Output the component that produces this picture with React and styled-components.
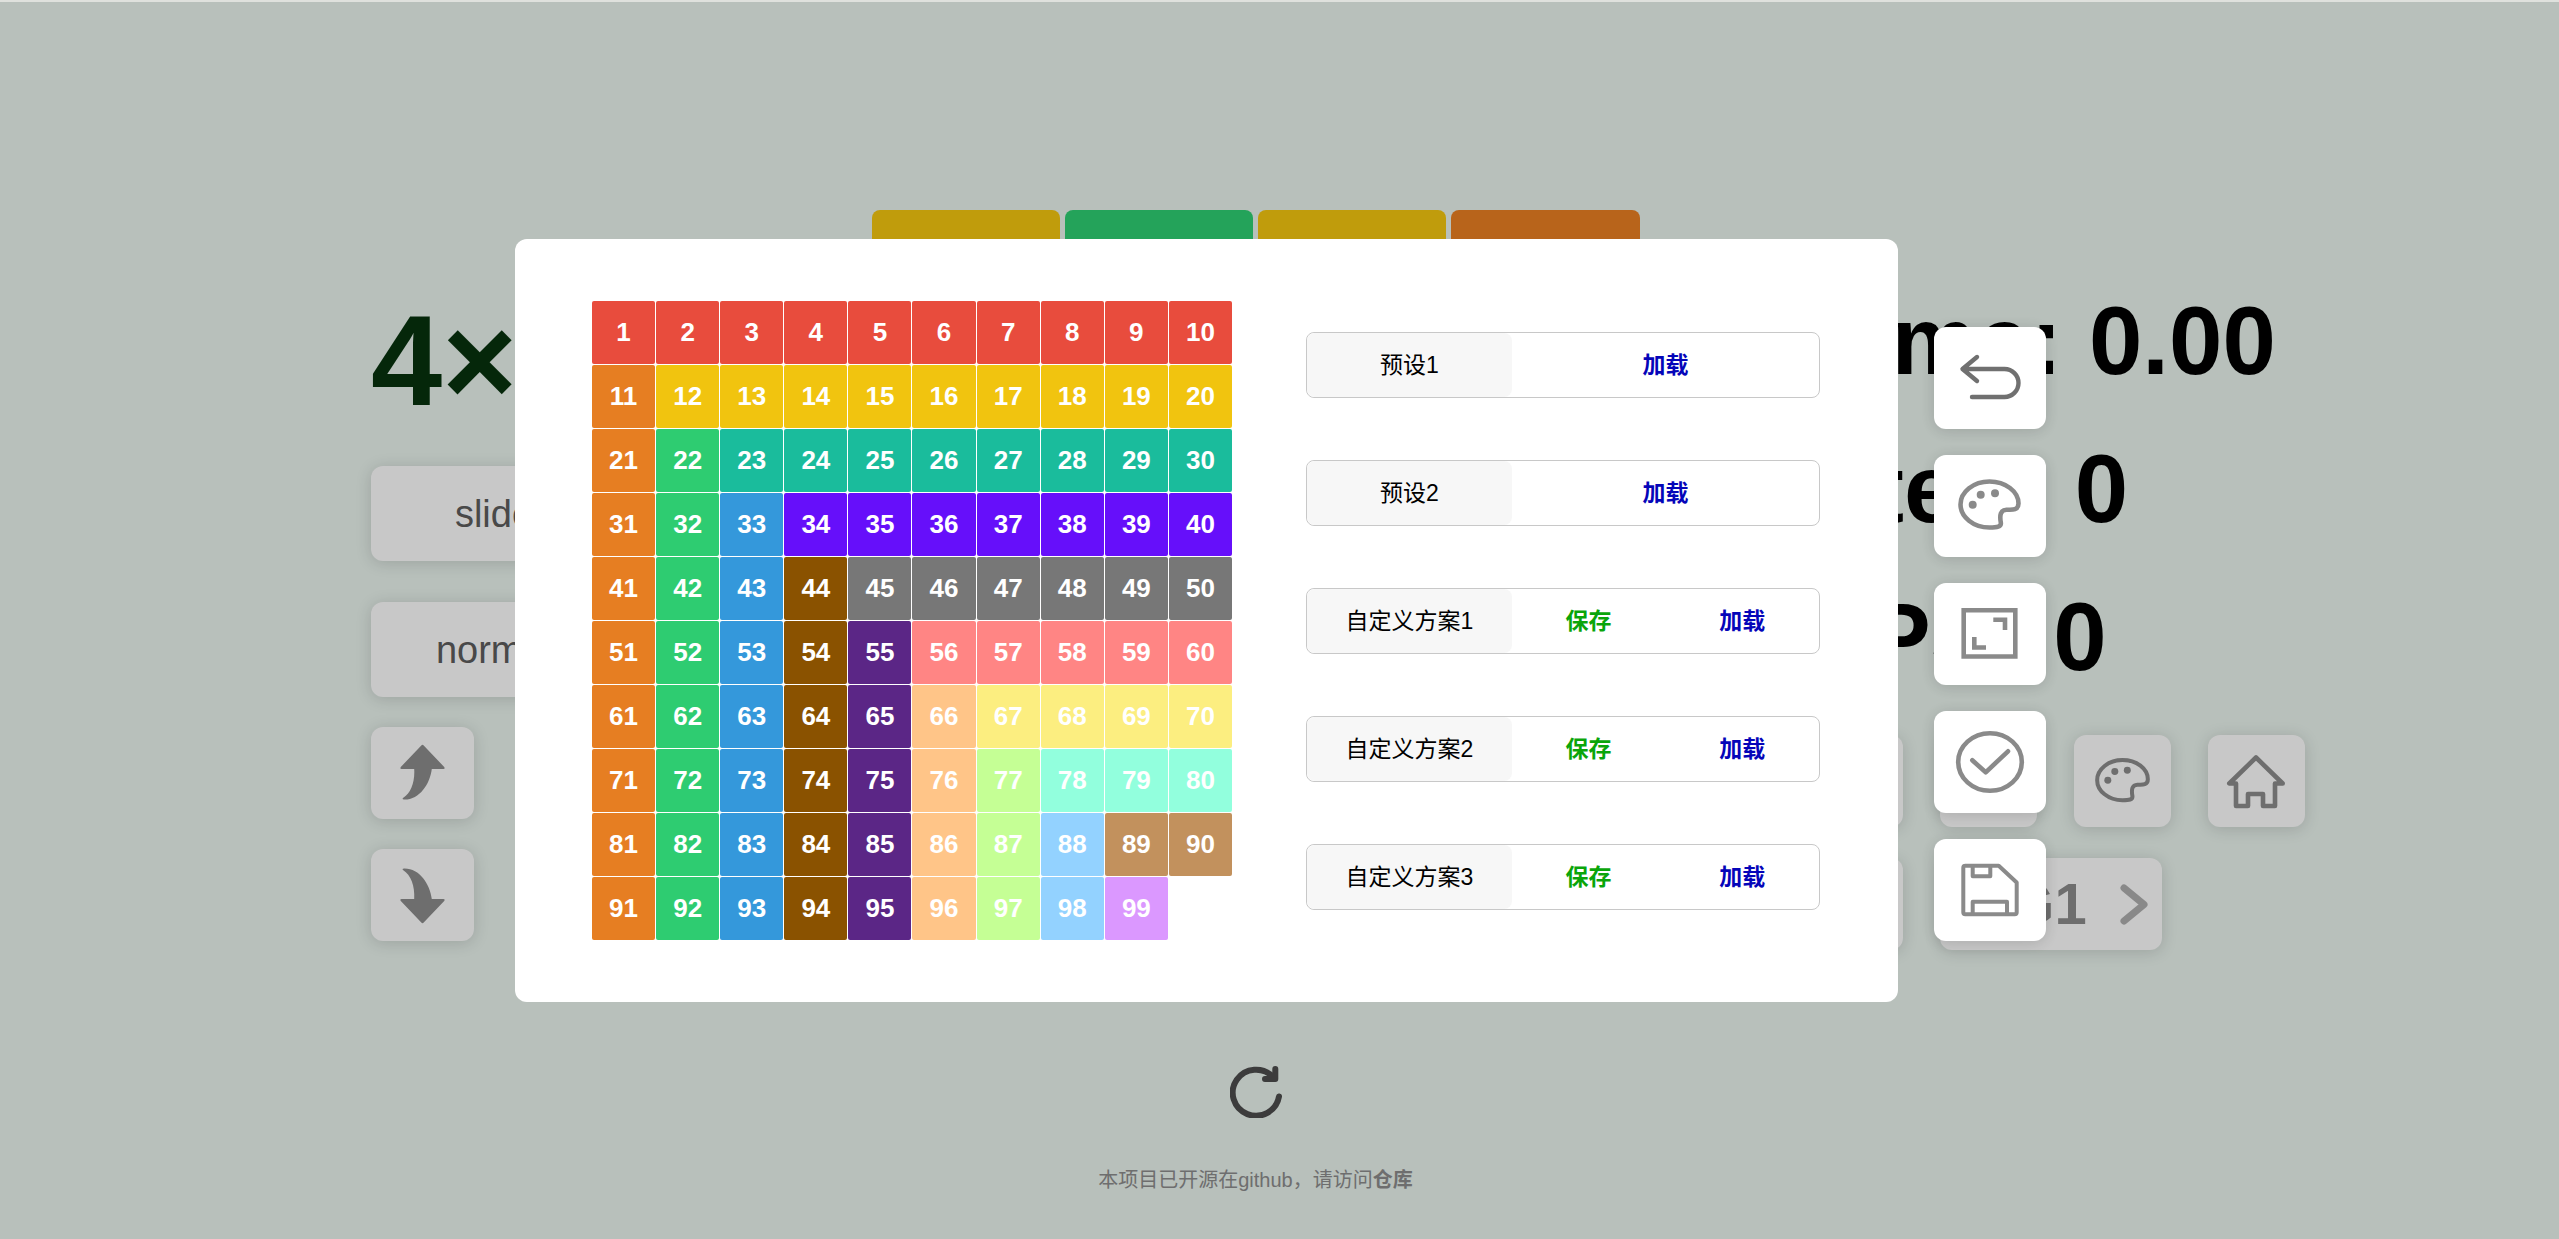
import React from "react";
import styled, { createGlobalStyle } from "styled-components";

const GlobalStyle = createGlobalStyle`
  *, *::before, *::after { box-sizing: border-box; }
  body {
    margin: 0;
    background: #e6f0ea;
    color: #000;
    font-family: "Liberation Sans", "Noto Sans CJK SC", sans-serif;
  }
  button, select { font: inherit; }
`;

const Page = styled.main`
  display: grid;
  grid-template-columns: 334px 768px 500px;
  justify-content: space-between;
  align-items: start;
  min-height: 100vh;
  padding: 210px 253px 0 371px;
  overflow: hidden;
`;

const Settings = styled.section`
  display: flex;
  flex-direction: column;
  align-items: flex-start;
  gap: 30px;
  padding-top: 87px;
`;

const Size = styled.h1`
  margin: 0 0 11px;
  font-size: 128px;
  line-height: 128px;
  color: #07310d;
`;

const ModeSelect = styled.select`
  appearance: none;
  width: 246px;
  height: 95px;
  margin-bottom: ${(p) => (p.$spaced ? "11px" : "0")};
  padding: 0;
  border: 0;
  border-radius: 12px;
  background: #fafafa;
  box-shadow: 0 2px 16px rgba(0, 0, 0, 0.15);
  color: #5c5c5c;
  font-size: 38px;
  text-align: center;
  text-align-last: center;
`;

const Tool = styled.button`
  display: flex;
  align-items: center;
  justify-content: center;
  flex: none;
  width: ${(p) => p.$width || 97}px;
  height: ${(p) => p.$height || 92}px;
  padding: 0;
  border: 0;
  border-radius: 12px;
  background: ${(p) => p.$background || "#fafafa"};
  box-shadow: 0 2px 16px rgba(0, 0, 0, 0.15);
  color: #8a8a8a;
  cursor: pointer;
`;

const Center = styled.section`
  display: flex;
  flex-direction: column;
  align-items: center;
`;

const Board = styled.div`
  display: grid;
  grid-template-columns: repeat(4, 1fr);
  gap: 5px;
  width: 100%;
`;

const BoardTile = styled.div`
  aspect-ratio: 1;
  border-radius: 8px;
  background: ${(p) => p.$color};
`;

const Reset = styled.button`
  display: flex;
  margin-top: 88px;
  padding: 0;
  border: 0;
  background: none;
  color: #4b4b4b;
  cursor: pointer;
`;

const Notice = styled.p`
  margin: 47px 0 0;
  font-size: 20px;
  line-height: 30px;
  color: #8a8a8a;
`;

const RepoLink = styled.a`
  color: inherit;
  font-weight: bold;
  text-decoration: none;
`;

const Results = styled.section`
  display: flex;
  flex-direction: column;
  gap: 31px;
  padding-top: 83px;
`;

const Stats = styled.div`
  display: flex;
  flex-direction: column;
  gap: 52px;
  margin-bottom: 19px;
  padding-left: 2px;
  font-size: 96px;
  font-weight: bold;
  line-height: 96px;
  white-space: nowrap;
`;

const ToolRow = styled.div`
  display: flex;
  gap: 37px;
`;

const Stepper = styled.div`
  display: flex;
  align-items: center;
  justify-content: space-between;
  width: 222px;
  height: 92px;
  padding: 0 14px 0 8px;
  border-radius: 12px;
  background: #fafafa;
  box-shadow: 0 2px 16px rgba(0, 0, 0, 0.15);
  color: #8a8a8a;
  font-size: 58px;
  font-weight: bold;
  line-height: 64px;
`;

const StepButton = styled.button`
  display: flex;
  padding: 0;
  border: 0;
  background: none;
  color: #acacac;
  cursor: pointer;
`;

const Overlay = styled.div`
  position: fixed;
  inset: 0;
  display: flex;
  align-items: center;
  justify-content: center;
  gap: 36px;
  padding-left: 2px;
  border-top: 2px solid #dfe1dd;
  background: rgba(0, 0, 0, 0.2);
`;

const Dialog = styled.section`
  display: flex;
  align-items: center;
  gap: 74px;
  padding: 62px 78px 62px 77px;
  border-radius: 12px;
  background: #fff;
`;

const Palette = styled.div`
  display: grid;
  grid-template-columns: repeat(10, 1fr);
  grid-auto-rows: 63px;
  gap: 1px;
  width: 640px;
`;

const Swatch = styled.button`
  padding: 0;
  border: 0;
  border-radius: 2px;
  background: ${(p) => p.$color};
  color: #fff;
  font-size: 26px;
  font-weight: bold;
  cursor: pointer;
`;

const Schemes = styled.div`
  display: flex;
  flex-direction: column;
  gap: 62px;
  width: 514px;
`;

const Scheme = styled.div`
  display: flex;
  height: 66px;
  border: 1px solid #c8c8c8;
  border-radius: 8px;
  font-size: 23px;
`;

const SchemeName = styled.span`
  display: flex;
  align-items: center;
  justify-content: center;
  width: 40%;
  padding-bottom: 4px;
  border-radius: 8px;
  background: #f7f7f7;
`;

const SchemeAction = styled.button`
  flex: 1;
  padding: 0 0 4px;
  border: 0;
  background: none;
  color: ${(p) => (p.$save ? "#0aa50a" : "#0505b9")};
  font-weight: bold;
  cursor: pointer;
`;

const Actions = styled.nav`
  display: flex;
  flex-direction: column;
  gap: 26px;
  padding-top: 26px;
`;

const ROW_COLORS = [
  "#e84c3d", "#f1c40f", "#1abc9c", "#660ffa", "#777777",
  "#ff8584", "#fcee80", "#92ffdd", "#c2915d",
];
const COLUMN_COLORS = [
  "#e67e22", "#2ecc71", "#3498db", "#8a5200", "#5b2686",
  "#ffc588", "#c5ff95", "#93d2ff", "#db98ff",
];

const swatches = Array.from({ length: 99 }, (_, i) => {
  const row = Math.floor(i / 10);
  const col = i % 10;
  return { n: i + 1, color: col >= row ? ROW_COLORS[row] : COLUMN_COLORS[col] };
});

const BOARD = [
  "#f1c40f", "#2ecc71", "#f1c40f", "#e67e22",
  "#e74c3c", "#e74c3c", "#e74c3c", "#e74c3c",
  "#e67e22", "#2ecc71", "#f1c40f", "#f1c40f",
  "#e67e22", "#2ecc71", "#3498db", "#e74c3c",
];

const SCHEMES = [
  { name: "预设1" },
  { name: "预设2" },
  { name: "自定义方案1", custom: true },
  { name: "自定义方案2", custom: true },
  { name: "自定义方案3", custom: true },
];

const Icon = ({ w = 112, h = 102, box, stroke = 4.6, children }) => (
  <svg
    width={w}
    height={h}
    viewBox={box || `0 0 ${w} ${h}`}
    fill="none"
    stroke="currentColor"
    strokeWidth={stroke}
    strokeLinecap="round"
    strokeLinejoin="round"
    aria-hidden="true"
  >
    {children}
  </svg>
);

const PaletteShape = () => (
  <>
    <path d="M55.5 26.5C39.5 26.5 26.5 37 26.5 49.5S39.5 72.5 55.5 72.5C63 72.5 67.5 72 66.8 67.5C65.5 60 66.5 55 72.5 54.7C77 54.7 84.5 56 84.5 48.5C84.5 36.5 71.5 26.5 55.5 26.5Z" />
    <g fill="currentColor" stroke="none">
      <circle cx="46.7" cy="39.7" r="4" />
      <circle cx="61" cy="38.3" r="4" />
      <circle cx="38.7" cy="49.7" r="4" />
    </g>
  </>
);

const BentArrow = ({ down }) => (
  <svg width="103" height="92" viewBox="0 0 103 92" fill="currentColor" aria-hidden="true">
    <path
      transform={down ? "matrix(1 0 0 -1 0 92)" : undefined}
      d="M50.3 18.4Q51.5 17.2 52.7 18.4L73.2 40Q74.4 42 72.4 42H60.8C59 57 48.5 73 33 72.6Q30.8 72.4 32 71C40 66 44 55 43.2 42H30.6Q28.6 42 29.8 40Z"
    />
  </svg>
);

export default function App() {
  return (
    <>
      <GlobalStyle />
      <Page>
        <Settings>
          <Size>4×4</Size>
          <ModeSelect $spaced aria-label="control">
            <option>slide</option>
          </ModeSelect>
          <ModeSelect aria-label="mode">
            <option>normal</option>
          </ModeSelect>
          <Tool $width={103} aria-label="up">
            <BentArrow />
          </Tool>
          <Tool $width={103} aria-label="down">
            <BentArrow down />
          </Tool>
        </Settings>

        <Center>
          <Board>
            {BOARD.map((color, i) => (
              <BoardTile key={i} $color={color} />
            ))}
          </Board>
          <Reset aria-label="reset">
            <Icon w={52} h={52} stroke={6}>
              <path d="M49 30.5A23.3 23 0 1 1 43 11" />
              <path d="M45.3 3V13H35" />
            </Icon>
          </Reset>
          <Notice>
            本项目已开源在github，请访问<RepoLink href="#repo">仓库</RepoLink>
          </Notice>
        </Center>

        <Results>
          <Stats>
            <div>Time: 0.00</div>
            <div>Step: 0</div>
            <div>TPS: 0</div>
          </Stats>
          <ToolRow>
            <Tool aria-label="statistics" />
            <Tool aria-label="replay" />
            <Tool aria-label="colors">
              <Icon w={97} h={92} box="0 -2 111 105">
                <PaletteShape />
              </Icon>
            </Tool>
            <Tool aria-label="home">
              <Icon w={97} h={92}>
                <path d="M48 22.5L21.3 48.5H28V71H40V59H55V71H67V48.5H74.7Z" />
              </Icon>
            </Tool>
          </ToolRow>
          <ToolRow>
            <Tool aria-label="record" />
            <Stepper>
              <StepButton aria-label="previous group">
                <Icon w={28} h={41} stroke={7}>
                  <path d="M24 4L4 20.5L24 37" />
                </Icon>
              </StepButton>
              <span>G1</span>
              <StepButton aria-label="next group">
                <Icon w={28} h={41} stroke={7}>
                  <path d="M4 4L24 20.5L4 37" />
                </Icon>
              </StepButton>
            </Stepper>
          </ToolRow>
        </Results>
      </Page>

      <Overlay>
        <Dialog role="dialog" aria-label="配色">
          <Palette>
            {swatches.map(({ n, color }) => (
              <Swatch key={n} $color={color}>
                {n}
              </Swatch>
            ))}
          </Palette>
          <Schemes>
            {SCHEMES.map(({ name, custom }) => (
              <Scheme key={name}>
                <SchemeName>{name}</SchemeName>
                {custom && <SchemeAction $save>保存</SchemeAction>}
                <SchemeAction>加载</SchemeAction>
              </Scheme>
            ))}
          </Schemes>
        </Dialog>
        <Actions>
          <Tool $width={112} $height={102} $background="#fff" aria-label="undo">
            <Icon stroke={4.4}>
              <path stroke="#707070" d="M38 70H70.5a14 14 0 0 0 0-28H29M43 30L28.5 42L43 54" />
            </Icon>
          </Tool>
          <Tool $width={112} $height={102} $background="#fff" aria-label="palette">
            <Icon>
              <PaletteShape />
            </Icon>
          </Tool>
          <Tool $width={112} $height={102} $background="#fff" aria-label="expand">
            <Icon>
              <g strokeLinecap="butt" strokeLinejoin="miter">
                <path d="M29.7 27.3H81.3V73.5H29.7Z" />
                <path d="M59.3 36.7H71V47M40.3 54V64.5H52" />
              </g>
            </Icon>
          </Tool>
          <Tool $width={112} $height={102} $background="#fff" aria-label="confirm">
            <Icon>
              <ellipse cx="56" cy="51" rx="31.8" ry="28.8" />
              <path d="M38.3 49.3L51.7 61.3L74 40.3" />
            </Icon>
          </Tool>
          <Tool $width={112} $height={102} $background="#fff" aria-label="save">
            <Icon stroke={4}>
              <path d="M31 26.7H64.7L82.7 43.5V73.3Q82.7 75.3 80.7 75.3H31.3Q29.3 75.3 29.3 73.3V28.7Q29.3 26.7 31.3 26.7" />
              <path d="M38.7 27V37.3H56.3V27M38.7 75V62.7H73V75" />
            </Icon>
          </Tool>
        </Actions>
      </Overlay>
    </>
  );
}
